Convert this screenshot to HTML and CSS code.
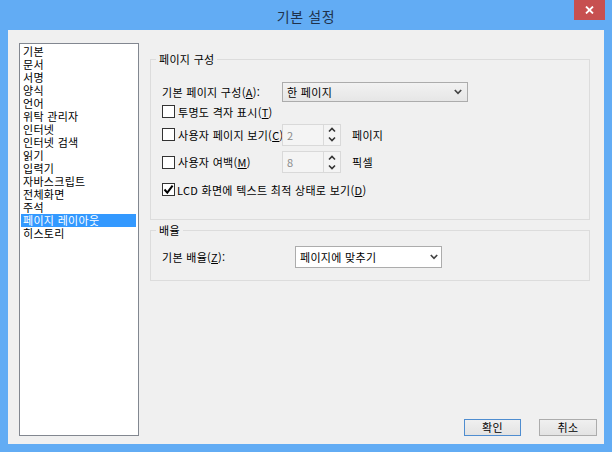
FILE: index.html
```html
<!DOCTYPE html>
<html lang="ko">
<head>
<meta charset="utf-8">
<title>기본 설정</title>
<link rel="stylesheet" href="styles.css">
</head>
<body>
<div class="window">
  <div class="titlebar">
    <span class="title">기본 설정</span>
    <div class="close">
      <svg width="9" height="8" viewBox="0 0 9 8"><path d="M1 0.5 L8 7.5 M8 0.5 L1 7.5" stroke="#fff" stroke-width="1.8" fill="none"/></svg>
    </div>
  </div>
  <div class="client">
    <ul class="list">
      <li>기본</li>
      <li>문서</li>
      <li>서명</li>
      <li>양식</li>
      <li>언어</li>
      <li>위탁 관리자</li>
      <li>인터넷</li>
      <li>인터넷 검색</li>
      <li>읽기</li>
      <li>입력기</li>
      <li>자바스크립트</li>
      <li>전체화면</li>
      <li>주석</li>
      <li class="selected">페이지 레이아웃</li>
      <li>히스토리</li>
    </ul>
    <div class="main">
      <fieldset class="group g1">
        <legend>페이지 구성</legend>
        <div class="body b1">
          <div class="row r1">
            <span class="lbl w120">기본 페이지 구성(<u>A</u>):</span>
            <div class="combo c1"><span>한 페이지</span>
              <svg class="chev" width="8" height="6" viewBox="0 0 8 6"><path d="M0.8 1 L4 4.3 L7.2 1" stroke="#444" stroke-width="1.7" fill="none"/></svg>
            </div>
          </div>
          <div class="row r2">
            <span class="cb"></span><span>투명도 격자 표시(<u>T</u>)</span>
          </div>
          <div class="row r3">
            <span class="cblbl w120"><span class="cb"></span><span class="cbtext">사용자 페이지 보기(<u>C</u>)</span></span>
            <div class="spin"><span class="val">2</span><span class="arrows">
              <svg width="8" height="6" viewBox="0 0 8 6"><path d="M1 4.5 L4 1.5 L7 4.5" stroke="#333" stroke-width="1.6" fill="none"/></svg>
              <svg width="8" height="6" viewBox="0 0 8 6"><path d="M1 1.5 L4 4.5 L7 1.5" stroke="#333" stroke-width="1.6" fill="none"/></svg>
            </span></div>
            <span class="unit">페이지</span>
          </div>
          <div class="row r4">
            <span class="cblbl w120"><span class="cb"></span><span class="cbtext">사용자 여백(<u>M</u>)</span></span>
            <div class="spin"><span class="val">8</span><span class="arrows">
              <svg width="8" height="6" viewBox="0 0 8 6"><path d="M1 4.5 L4 1.5 L7 4.5" stroke="#333" stroke-width="1.6" fill="none"/></svg>
              <svg width="8" height="6" viewBox="0 0 8 6"><path d="M1 1.5 L4 4.5 L7 1.5" stroke="#333" stroke-width="1.6" fill="none"/></svg>
            </span></div>
            <span class="unit">픽셀</span>
          </div>
          <div class="row r5">
            <span class="cb checked"><svg width="11" height="11" viewBox="0 0 11 11"><path d="M1.5 5.5 L4.3 8.6 L9.6 1.6" stroke="#000" stroke-width="2" fill="none"/></svg></span><span class="lcd">LCD 화면에 텍스트 최적 상태로 보기(<u>D</u>)</span>
          </div>
        </div>
      </fieldset>
      <fieldset class="group g2">
        <legend>배율</legend>
        <div class="body b2">
          <div class="row r6">
            <span class="lbl w133">기본 배율(<u>Z</u>):</span>
            <div class="combo c2"><span>페이지에 맞추기</span>
              <svg class="chev" width="8" height="6" viewBox="0 0 8 6"><path d="M0.8 1 L4 4.3 L7.2 1" stroke="#444" stroke-width="1.7" fill="none"/></svg>
            </div>
          </div>
        </div>
      </fieldset>
      <div class="buttons">
        <button class="btn default">확인</button>
        <button class="btn">취소</button>
      </div>
    </div>
  </div>
</div>
</body>
</html>
```
FILE: styles.css
```css
* { box-sizing: border-box; }
html, body { margin: 0; padding: 0; }
body {
  font-family: "Noto Sans CJK KR", "Noto Sans", sans-serif;
  font-size: 11px;
  letter-spacing: 0.3px;
  color: #000;
  background: #62acf4;
}
.window {
  width: 612px;
  height: 452px;
  background: #62acf4;
  padding: 0 8px 8px 8px;
  display: flex;
  flex-direction: column;
}
.titlebar {
  height: 30px;
  position: relative;
  display: flex;
  align-items: center;
  justify-content: center;
}
.title {
  font-size: 14px;
  line-height: 18px;
  letter-spacing: 0.6px;
  color: #1f324c;
  margin-top: 1px;
}
.close {
  position: absolute;
  right: -1px;
  top: 0;
  width: 31px;
  height: 20px;
  background: #c75050;
  display: flex;
  align-items: center;
  justify-content: center;
}
.client {
  flex: 1;
  background: #f0f0f0;
  display: flex;
  padding: 13px 7px 8px 11px;
  gap: 11px;
}
.list {
  list-style: none;
  margin: 0;
  padding: 1px 2px 1px 1px;
  width: 120px;
  background: #fff;
  border: 1px solid #828790;
}
.list li {
  height: 13px;
  line-height: 13px;
  padding-left: 2px;
  white-space: nowrap;
}
.list li.selected {
  background: #3399ff;
  color: #fff;
}
.main {
  flex: 1;
  display: flex;
  flex-direction: column;
}
.group {
  margin: 0 7px 0 0;
  padding: 0;
  border: 1px solid #dcdcdc;
  min-width: 0;
}
.group legend {
  margin-left: 5px;
  padding: 0 3px;
  line-height: 16px;
  height: 16px;
}
.g1 { margin-top: 8px; }
.g2 { margin-top: 2px; }
.body { padding-left: 11px; }
.b1 { padding-top: 15px; padding-bottom: 16px; }
.b2 { padding-top: 8px; padding-bottom: 12px; }
.row {
  display: flex;
  align-items: center;
  white-space: nowrap;
}
.r1 { height: 20px; }
.r2 { height: 19px; }
.r3 { height: 27px; }
.r4 { height: 28px; }
.r5 { height: 27px; }
.r6 { height: 22px; }
.lbl { display: block; line-height: 16px; }
.w120 { width: 120px; flex: none; }
.w133 { width: 133px; flex: none; }
.combo {
  display: flex;
  align-items: center;
  justify-content: space-between;
  border: 1px solid #acacac;
  padding: 0 5px 0 4px;
}
.c1 {
  width: 186px;
  height: 20px;
  background: linear-gradient(#f2f2f2, #e6e6e6);
}
.c2 {
  width: 147px;
  height: 22px;
  background: #fff;
  padding-right: 3px;
}
.cb {
  width: 13px;
  height: 13px;
  flex: none;
  background: #fff;
  border: 1px solid #333;
  margin-right: 3px;
  display: flex;
  align-items: center;
  justify-content: center;
}
.cblbl {
  display: flex;
  align-items: center;
  overflow: hidden;
}
.cbtext { overflow: hidden; }
.lcd { margin-left: -1px; }
.spin {
  width: 59px;
  height: 22px;
  flex: none;
  border: 1px solid #d9d9d9;
  background: #f4f4f4;
  display: flex;
}
.spin .val {
  flex: 1;
  color: #8a8a8a;
  padding-left: 4px;
  line-height: 20px;
}
.spin .arrows {
  width: 17px;
  border-left: 1px solid #dadada;
  display: flex;
  flex-direction: column;
  align-items: center;
  justify-content: center;
  gap: 3px;
}
.unit { margin-left: 11px; }
.buttons {
  margin-top: auto;
  display: flex;
  justify-content: flex-end;
  gap: 18px;
}
.btn {
  font-family: inherit;
  font-size: 11px;
  letter-spacing: 0.3px;
  width: 58px;
  height: 17px;
  padding: 0;
  line-height: 15px;
  color: #000;
  background: linear-gradient(#f0f0f0, #e3e3e3);
  border: 1px solid #acacac;
}
.btn.default {
  width: 57px;
  border-color: #4f8dd0;
}
```
